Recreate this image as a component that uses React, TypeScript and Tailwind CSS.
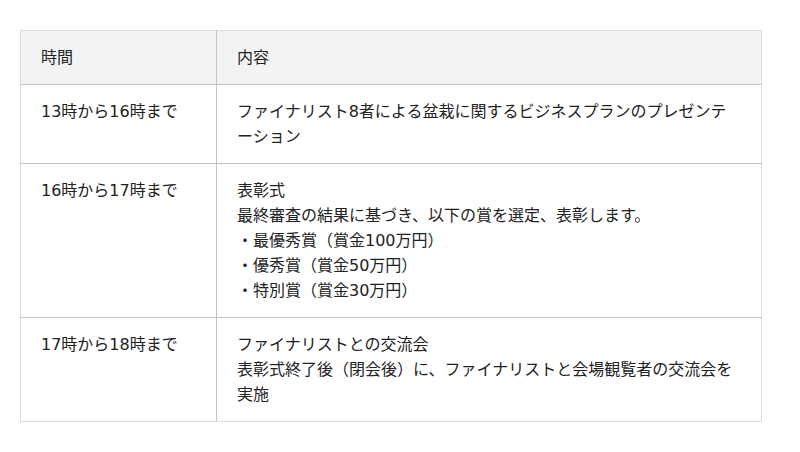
const rows = [
  {
    time: '13時から16時まで',
    lines: ['ファイナリスト8者による盆栽に関するビジネスプランのプレゼンテーション'],
  },
  {
    time: '16時から17時まで',
    lines: [
      '表彰式',
      '最終審査の結果に基づき、以下の賞を選定、表彰します。',
      '・最優秀賞（賞金100万円）',
      '・優秀賞（賞金50万円）',
      '・特別賞（賞金30万円）',
    ],
  },
  {
    time: '17時から18時まで',
    lines: ['ファイナリストとの交流会', '表彰式終了後（閉会後）に、ファイナリストと会場観覧者の交流会を実施'],
  },
]

export default function App() {
  return (
    <div className="h-[452px] w-[800px] bg-white pt-[30px] pl-5 font-['DejaVu_Sans','Noto_Sans_CJK_JP',sans-serif] text-base leading-[25px] text-[#222]">
      <table className="w-[742px] table-fixed border-collapse">
        <colgroup>
          <col className="w-[196px]" />
          <col />
        </colgroup>
        <thead>
          <tr className="bg-[#f3f3f3] text-left">
            <th className="h-[54px] border border-t-[#dcdcdc] border-r-[#c4c4c4] border-b-[#c4c4c4] border-l-[#dcdcdc] px-5 py-0 font-normal">
              時間
            </th>
            <th className="h-[54px] border border-t-[#dcdcdc] border-r-[#dcdcdc] border-b-[#c4c4c4] border-l-[#c4c4c4] py-0 pr-6 pl-5 font-normal">
              内容
            </th>
          </tr>
        </thead>
        <tbody>
          {rows.map((row, i) => {
            const last = i === rows.length - 1
            return (
              <tr key={i}>
                <td
                  className={`border border-t-[#c4c4c4] border-r-[#c4c4c4] border-l-[#dcdcdc] px-5 py-[14px] align-top ${
                    last ? 'border-b-[#dcdcdc]' : 'border-b-[#c4c4c4]'
                  }`}
                >
                  <div className="h-[25px] overflow-hidden">{row.time}</div>
                </td>
                <td
                  className={`border border-t-[#c4c4c4] border-r-[#dcdcdc] border-l-[#c4c4c4] py-[14px] pr-6 pl-5 align-top ${
                    last ? 'border-b-[#dcdcdc]' : 'border-b-[#c4c4c4]'
                  }`}
                >
                  {row.lines.map((line, j) => (
                    <div key={j}>{line}</div>
                  ))}
                </td>
              </tr>
            )
          })}
        </tbody>
      </table>
    </div>
  )
}
